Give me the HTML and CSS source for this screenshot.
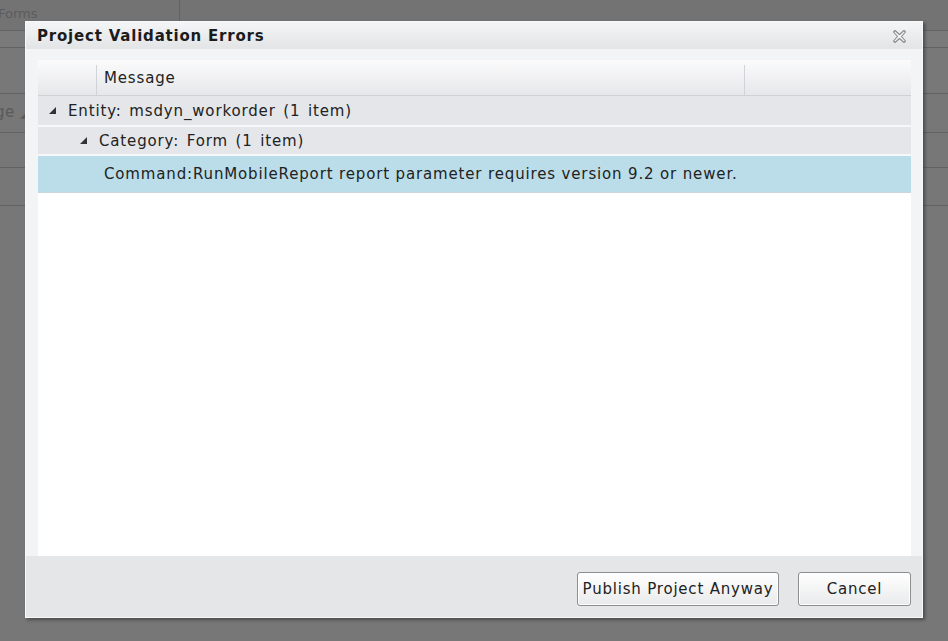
FILE: index.html
```html
<!DOCTYPE html>
<html>
<head>
<meta charset="utf-8">
<link rel="stylesheet" href="styles.css">
</head>
<body>
<div class="app">
  <div class="app-row r1"><div class="tab">Forms</div><div class="tab-rest"></div></div>
  <div class="app-row r2"></div>
  <div class="app-row r3"></div>
  <div class="app-row r4"><span class="ghost">ge &#9698;</span></div>
  <div class="app-row r5"></div>
  <div class="app-row r6"></div>
</div>

<div class="dialog">
  <div class="titlebar">
    <span class="title">Project Validation Errors</span>
    <svg class="close" width="15" height="15" viewBox="0 0 15 15">
      <path d="M1.5 3 L3 1.5 L7.5 5.5 L12 1.5 L13.5 3 L9.5 7.5 L13.5 12 L12 13.5 L7.5 9.5 L3 13.5 L1.5 12 L5.5 7.5 Z" fill="#f2f2f2" stroke="#8a8a8a" stroke-width="1.1" stroke-linejoin="round"/>
    </svg>
  </div>
  <div class="body">
    <div class="grid">
      <div class="grid-head">
        <div class="col c0"></div>
        <div class="col c1">Message</div>
        <div class="col c2"></div>
      </div>
      <div class="group g1">
        <svg class="tri" width="7" height="7" viewBox="0 0 7 7"><path d="M7 0 L7 7 L0 7 Z" fill="#333"/></svg>
        <span>Entity: msdyn_workorder (1 item)</span>
      </div>
      <div class="group g2">
        <svg class="tri" width="7" height="7" viewBox="0 0 7 7"><path d="M7 0 L7 7 L0 7 Z" fill="#333"/></svg>
        <span>Category: Form (1 item)</span>
      </div>
      <div class="row selected">Command:RunMobileReport report parameter requires version 9.2 or newer.</div>
    </div>
    <div class="footer">
      <button class="btn btn-publish">Publish Project Anyway</button>
      <button class="btn btn-cancel">Cancel</button>
    </div>
  </div>
</div>
</body>
</html>
```

FILE: styles.css
```css
html, body {
  margin: 0;
  padding: 0;
}
body {
  width: 948px;
  height: 641px;
  overflow: hidden;
  background: #777777;
  font-family: "DejaVu Sans", Verdana, sans-serif;
  position: relative;
}

/* background application (dimmed) */
.app {
  display: flex;
  flex-direction: column;
}
.app-row {
  border-bottom: 1px solid #626262;
  box-sizing: border-box;
}
.r1 { height: 31px; display: flex; background: #737373; }
.r2 { height: 17px; background: #7a7a7a; }
.r3 { height: 46px; background: #787878; }
.r4 { height: 39px; background: #777777; }
.r5 { height: 35px; background: #777777; }
.r6 { height: 38px; background: #777777; }
.tab {
  width: 182px;
  border-right: 1px solid #626262;
  box-sizing: border-box;
  color: #5c5c5c;
  font-size: 13px;
  padding-top: 6px;
  margin-left: -2px;
}
.tab-rest { flex: 1; }
.ghost {
  display: inline-block;
  margin-left: -5px;
  margin-top: 9px;
  color: #5a5a5a;
  font-size: 15px;
  letter-spacing: 0.5px;
}

/* dialog */
.dialog {
  position: absolute;
  left: 25px;
  top: 21px;
  width: 898px;
  height: 597px;
  box-sizing: border-box;
  border: 1px solid #f8f9fa;
  background: #e4e6e8;
  box-shadow: 2px 2px 3px rgba(40, 40, 40, 0.55);
  display: flex;
  flex-direction: column;
}
.titlebar {
  height: 26px;
  flex: none;
  display: flex;
  align-items: center;
  justify-content: space-between;
  padding: 1px 15px 0 11px;
  background: linear-gradient(#f4f5f6, #e2e4e6);
}
.title {
  font-weight: bold;
  font-size: 15px;
  color: #1c1c1c;
  letter-spacing: 0.8px;
}
.close { display: block; margin-top: 0; }

.body {
  flex: 1;
  display: flex;
  flex-direction: column;
  background: #f2f4f6;
  padding: 11px 11px 0 12px;
}
.grid {
  flex: 1;
  background: #ffffff;
  display: flex;
  flex-direction: column;
  font-size: 15px;
  letter-spacing: 0.85px;
  color: #222;
}
.grid-head {
  height: 36px;
  display: flex;
  background: linear-gradient(#fbfbfc, #e6e7e9);
  border-bottom: 1px solid #cfd1d4;
  box-sizing: border-box;
  flex: none;
}
.col {
  display: flex;
  align-items: center;
  box-sizing: border-box;
  margin: 5px 0 0 0;
}
.c0 { width: 59px; border-right: 1px solid #d0d2d5; }
.c1 { width: 648px; padding-left: 7px; border-right: 1px solid #d0d2d5; padding-bottom: 4px; }
.c2 { flex: 1; }

.group {
  display: flex;
  align-items: center;
  background: #e4e6e9;
  border-bottom: 2px solid #f6f7f8;
  box-sizing: border-box;
  flex: none;
  word-spacing: 2px;
}
.g1 { height: 31px; padding-left: 11px; }
.g2 { height: 29px; padding-left: 42px; }
.tri { margin-right: 12px; flex: none; }

.row {
  flex: none;
  height: 37px;
  display: flex;
  align-items: center;
  padding-left: 66px;
  box-sizing: border-box;
}
.selected {
  background: #badde9;
  border-bottom: 1px solid #c9d6dc;
}

.footer {
  height: 61px;
  flex: none;
  display: flex;
  justify-content: flex-end;
  align-items: flex-start;
  gap: 19px;
  background: #e4e6e8;
  margin: 0 -11px 0 -12px;
  padding: 16px 11px 0 0;
  box-sizing: border-box;
}
.btn {
  height: 34px;
  font-family: "DejaVu Sans", Verdana, sans-serif;
  font-size: 15px;
  letter-spacing: 0.8px;
  color: #222;
  border: 1px solid #8c8e90;
  border-radius: 3px;
  background: linear-gradient(#ffffff, #e9eaeb);
  box-shadow: inset 0 0 0 1px #ffffff;
  padding: 0;
}
.btn-publish { width: 202px; }
.btn-cancel { width: 113px; }
```
